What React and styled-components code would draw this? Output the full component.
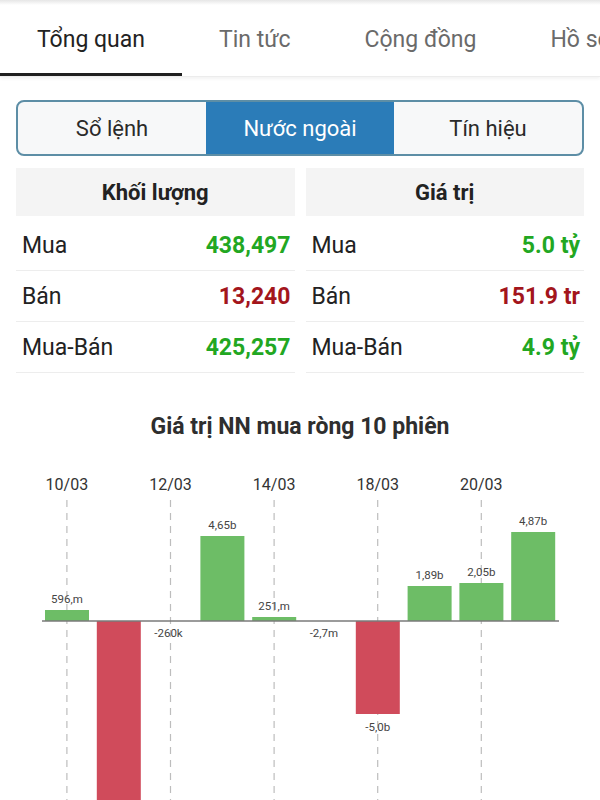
import React from 'react';
import styled, { createGlobalStyle } from 'styled-components';

const GlobalStyle = createGlobalStyle`
    body {
        margin: 0;
        background: #fff;
        font-family: Roboto, 'Noto Sans', sans-serif;
    }
`;

const Page = styled.div`
    width: 600px;
    height: 800px;
    overflow: hidden;
    background: #fff;
`;

const TopShade = styled.div`
    height: 5px;
    background: linear-gradient(#e6e6e6, #fff);
`;

const TabBar = styled.nav`
    display: flex;
    height: 71px;
    overflow: hidden;
    border-bottom: 1px solid #ececec;
    box-shadow: 0 2px 3px rgba(0, 0, 0, 0.05);
`;

const Tab = styled.div`
    flex-shrink: 0;
    display: flex;
    align-items: center;
    justify-content: center;
    padding: 0 37px;
    font-size: 23px;
    color: ${p => (p.$active ? '#222' : '#6a6a6a')};
    border-bottom: 3px solid ${p => (p.$active ? '#1f1f1f' : 'transparent')};
    white-space: nowrap;
`;

const Segmented = styled.div`
    display: flex;
    margin: 23px 16px 0;
    height: 52px;
    border: 2px solid #5d8ea6;
    border-radius: 8px;
    overflow: hidden;
    background: #f7f8f9;
`;

const Segment = styled.div`
    flex: 1;
    display: flex;
    align-items: center;
    justify-content: center;
    font-size: 22px;
    color: ${p => (p.$active ? '#fff' : '#2a2a2a')};
    background: ${p => (p.$active ? '#2b7cb8' : 'transparent')};
`;

const Stats = styled.div`
    display: grid;
    grid-template-columns: 1fr 1fr;
    gap: 11px;
    margin: 12px 16px 0;
`;

const Column = styled.div`
    display: flex;
    flex-direction: column;
`;

const ColHead = styled.div`
    height: 48px;
    display: flex;
    align-items: center;
    justify-content: center;
    background: #f4f4f4;
    font-size: 22px;
    font-weight: 700;
    color: #222;
    margin-bottom: 4px;
`;

const Row = styled.div`
    display: flex;
    align-items: center;
    justify-content: space-between;
    height: 50px;
    padding: 0 4px 0 6px;
    border-bottom: 1px solid #ededed;
`;

const Label = styled.span`
    font-size: 23px;
    color: #222;
`;

const Value = styled.span`
    font-size: 23px;
    font-weight: 700;
    color: ${p => (p.$down ? '#a3151c' : '#22a722')};
`;

const ChartTitle = styled.h3`
    margin: 42px 0 0;
    font-size: 23px;
    line-height: 24px;
    font-weight: 700;
    text-align: center;
    color: #2e2e2e;
`;

const Chart = styled.svg`
    display: block;
    margin-top: 8px;
    font-family: Roboto, 'Noto Sans', sans-serif;
`;

const stats = [
    {
        title: 'Khối lượng',
        rows: [
            ['Mua', '438,497', false],
            ['Bán', '13,240', true],
            ['Mua-Bán', '425,257', false],
        ],
    },
    {
        title: 'Giá trị',
        rows: [
            ['Mua', '5.0 tỷ', false],
            ['Bán', '151.9 tr', true],
            ['Mua-Bán', '4.9 tỷ', false],
        ],
    },
];

// page coordinates: baseline at y=622, slot width ~51.8 from x=41
const BASE = 622;
const SLOT = 51.8;
const sessions = [
    { label: '596,m', h: 11 },
    { label: '', h: -200 },
    { label: '-260k', h: 0 },
    { label: '4,65b', h: 85 },
    { label: '251,m', h: 4 },
    { label: '-2,7m', h: 0 },
    { label: '-5,0b', h: -93 },
    { label: '1,89b', h: 35 },
    { label: '2,05b', h: 38 },
    { label: '4,87b', h: 89 },
];
const dates = [
    ['10/03', 0],
    ['12/03', 2],
    ['14/03', 4],
    ['18/03', 6],
    ['20/03', 8],
];

const center = i => 41 + SLOT * i + SLOT / 2;

const App = () => {
    return (
        <Page>
            <GlobalStyle />
            <TopShade />
            <TabBar>
                <Tab $active>Tổng quan</Tab>
                <Tab>Tin tức</Tab>
                <Tab>Cộng đồng</Tab>
                <Tab>Hồ sơ</Tab>
            </TabBar>

            <Segmented>
                <Segment>Sổ lệnh</Segment>
                <Segment $active>Nước ngoài</Segment>
                <Segment>Tín hiệu</Segment>
            </Segmented>

            <Stats>
                {stats.map(col => (
                    <Column key={col.title}>
                        <ColHead>{col.title}</ColHead>
                        {col.rows.map(([name, val, down]) => (
                            <Row key={name}>
                                <Label>{name}</Label>
                                <Value $down={down}>{val}</Value>
                            </Row>
                        ))}
                    </Column>
                ))}
            </Stats>

            <ChartTitle>Giá trị NN mua ròng 10 phiên</ChartTitle>

            <Chart width="600" height="360" viewBox="0 448 600 360">
                {dates.map(([d, i]) => (
                    <g key={d}>
                        <text x={center(i)} y={491} fontSize="16" fill="#333" textAnchor="middle">{d}</text>
                        <line x1={center(i)} x2={center(i)} y1={501} y2={810} stroke="#bdbdbd" strokeWidth="1.2" strokeDasharray="7 6" />
                    </g>
                ))}
                {sessions.map((s, i) => {
                    const x = 41 + SLOT * i + 4;
                    const w = 44;
                    const up = s.h >= 0;
                    const y = up ? BASE - s.h : BASE;
                    const ly = up ? (s.h > 0 ? BASE - s.h - 7 : BASE + 16) : BASE - s.h + 17;
                    return (
                        <g key={i}>
                            {s.h !== 0 && (
                                <rect x={x} y={y} width={w} height={Math.abs(s.h)} fill={up ? '#6dbd66' : '#d04b5b'} />
                            )}
                            {s.label && (
                                <text x={center(i) - (s.h === 0 ? 2 : 0)} y={ly} fontSize="11.5" fill="#444" textAnchor="middle">{s.label}</text>
                            )}
                        </g>
                    );
                })}
                <line x1="42" x2="559" y1={BASE} y2={BASE} stroke="#7a7a7a" strokeWidth="1.5" />
            </Chart>
        </Page>
    );
};

export default App;
